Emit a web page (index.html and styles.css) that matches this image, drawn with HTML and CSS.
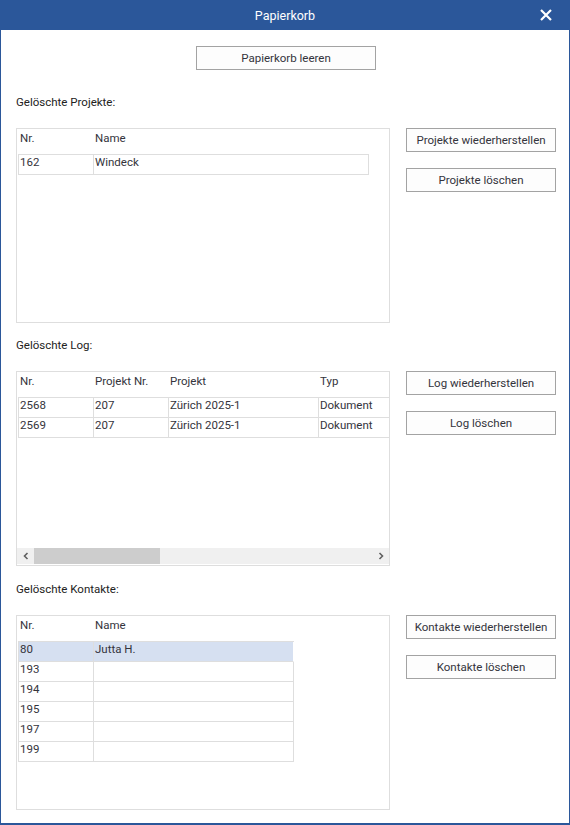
FILE: index.html
```html
<!DOCTYPE html>
<html lang="de">

<head>
    <meta charset="UTF-8">
    <meta name="viewport" content="width=device-width, initial-scale=1.0">
    <title>Papierkorb</title>
    <link rel="stylesheet" href="styles.css">
</head>

<body>
    <div class="window">
        <div class="titlebar">
            <span class="title">Papierkorb</span>
            <button class="close-btn" title="Schließen">
                <svg width="12" height="12" viewBox="0 0 12 12">
                    <path d="M1 1 L11 11 M11 1 L1 11" stroke="#fff" stroke-width="2.2" fill="none" />
                </svg>
            </button>
        </div>

        <div class="content">
            <div class="top-actions">
                <button class="btn btn-wide">Papierkorb leeren</button>
            </div>

            <!-- Projekte -->
            <section class="section">
                <div class="section-label">Gelöschte Projekte:</div>
                <div class="section-row">
                    <div class="grid-box">
                        <div class="grid-head">
                            <div class="cell c-nr">Nr.</div>
                            <div class="cell c-name">Name</div>
                        </div>
                        <div class="grid-body">
                            <div class="row">
                                <div class="cell c-nr">162</div>
                                <div class="cell c-name">Windeck</div>
                            </div>
                        </div>
                    </div>
                    <div class="actions">
                        <button class="btn">Projekte wiederherstellen</button>
                        <button class="btn">Projekte löschen</button>
                    </div>
                </div>
            </section>

            <!-- Log -->
            <section class="section">
                <div class="section-label">Gelöschte Log:</div>
                <div class="section-row">
                    <div class="grid-box has-scroll">
                        <div class="grid-area">
                            <div class="grid-head">
                                <div class="cell c-nr">Nr.</div>
                                <div class="cell c-pnr">Projekt Nr.</div>
                                <div class="cell c-proj">Projekt</div>
                                <div class="cell c-typ">Typ</div>
                            </div>
                            <div class="grid-body">
                                <div class="row">
                                    <div class="cell c-nr">2568</div>
                                    <div class="cell c-pnr">207</div>
                                    <div class="cell c-proj">Zürich 2025-1</div>
                                    <div class="cell c-typ">Dokument</div>
                                </div>
                                <div class="row">
                                    <div class="cell c-nr">2569</div>
                                    <div class="cell c-pnr">207</div>
                                    <div class="cell c-proj">Zürich 2025-1</div>
                                    <div class="cell c-typ">Dokument</div>
                                </div>
                            </div>
                        </div>
                        <div class="hscroll">
                            <span class="arrow">
                                <svg width="8" height="8" viewBox="0 0 8 8"><path d="M5.5 1 L2.5 4 L5.5 7" stroke="#606060" stroke-width="1.6" fill="none" /></svg>
                            </span>
                            <div class="track"><div class="thumb"></div></div>
                            <span class="arrow">
                                <svg width="8" height="8" viewBox="0 0 8 8"><path d="M2.5 1 L5.5 4 L2.5 7" stroke="#606060" stroke-width="1.6" fill="none" /></svg>
                            </span>
                        </div>
                    </div>
                    <div class="actions">
                        <button class="btn">Log wiederherstellen</button>
                        <button class="btn">Log löschen</button>
                    </div>
                </div>
            </section>

            <!-- Kontakte -->
            <section class="section section-last">
                <div class="section-label">Gelöschte Kontakte:</div>
                <div class="section-row">
                    <div class="grid-box">
                        <div class="grid-head">
                            <div class="cell c-nr">Nr.</div>
                            <div class="cell c-kname">Name</div>
                        </div>
                        <div class="grid-body">
                            <div class="row selected">
                                <div class="cell c-nr">80</div>
                                <div class="cell c-kname">Jutta H.</div>
                            </div>
                            <div class="row">
                                <div class="cell c-nr">193</div>
                                <div class="cell c-kname"></div>
                            </div>
                            <div class="row">
                                <div class="cell c-nr">194</div>
                                <div class="cell c-kname"></div>
                            </div>
                            <div class="row">
                                <div class="cell c-nr">195</div>
                                <div class="cell c-kname"></div>
                            </div>
                            <div class="row">
                                <div class="cell c-nr">197</div>
                                <div class="cell c-kname"></div>
                            </div>
                            <div class="row">
                                <div class="cell c-nr">199</div>
                                <div class="cell c-kname"></div>
                            </div>
                        </div>
                    </div>
                    <div class="actions">
                        <button class="btn">Kontakte wiederherstellen</button>
                        <button class="btn">Kontakte löschen</button>
                    </div>
                </div>
            </section>
        </div>
    </div>
</body>

</html>
```

FILE: styles.css
```css
body {
    margin: 0;
    font-family: Roboto, "Liberation Sans", Arial, sans-serif;
    font-size: 11.5px;
    color: #34343c;
    background: #fff;
}

.window {
    width: 570px;
    height: 825px;
    box-sizing: border-box;
    border: 1px solid #2b579a;
    border-top: none;
    border-bottom-width: 2px;
    display: flex;
    flex-direction: column;
    background: #fff;
    overflow: hidden;
}

.titlebar {
    height: 30px;
    margin: 0 -1px;
    background-color: #2b579a;
    color: #fff;
    display: flex;
    align-items: center;
    justify-content: center;
    position: relative;
}

.title {
    font-size: 12.5px;
}

.close-btn {
    position: absolute;
    right: 18px;
    top: 9px;
    width: 12px;
    height: 12px;
    padding: 0;
    border: none;
    background: none;
    cursor: pointer;
    display: flex;
}

.content {
    padding: 16px 13px 0 15px;
}

.top-actions {
    display: flex;
    justify-content: center;
}

button {
    font-family: inherit;
}

.btn {
    width: 150px;
    height: 24px;
    padding: 0;
    font-size: 11.5px;
    color: #34343c;
    background-color: #fdfdfd;
    border: 1px solid #a3a3a3;
    cursor: pointer;
}

.btn:hover {
    background-color: #e5f1fb;
}

.btn-wide {
    width: 180px;
}

.section {
    margin-top: 15px;
}

.section:first-of-type {
    margin-top: 25px;
}

.section-last {
    margin-top: 16px;
}

.section-label {
    line-height: 14px;
    color: #222;
    margin-bottom: 19px;
}

.section-row {
    display: flex;
    gap: 16px;
}

.actions {
    width: 150px;
    display: flex;
    flex-direction: column;
    gap: 16px;
}

.grid-box {
    width: 374px;
    height: 195px;
    box-sizing: border-box;
    border: 1px solid #dedede;
    padding-left: 1px;
    overflow: hidden;
}

.grid-box.has-scroll {
    padding-left: 0;
    display: flex;
    flex-direction: column;
}

.has-scroll .grid-area {
    flex: 1;
    padding-left: 1px;
    overflow: hidden;
}

.grid-head {
    display: flex;
    height: 25px;
}

.grid-head .cell {
    border-color: transparent;
    padding-top: 2px;
}

.grid-body {
    border-top: 1px solid #dedede;
    display: inline-block;
}

.has-scroll .grid-body {
    display: block;
}

.row {
    display: flex;
    height: 20px;
}

.row.selected {
    background-color: #d6e0f1;
}

.cell {
    box-sizing: border-box;
    flex: none;
    height: 100%;
    padding: 0 0 0 1px;
    line-height: 14px;
    white-space: nowrap;
    overflow: hidden;
    border-right: 1px solid #dedede;
    border-bottom: 1px solid #dedede;
}

.grid-body .row .cell:first-child,
.grid-head .cell:first-child {
    border-left: 1px solid #dedede;
}

.grid-head .cell:first-child {
    border-left-color: transparent;
}

.c-nr { width: 76px; }
.c-name { width: 275px; }
.c-pnr { width: 75px; }
.c-proj { width: 150px; }
.c-typ { width: 150px; }
.c-kname { width: 200px; }

.row.selected .c-kname {
    border-right-color: #fff;
}

.hscroll {
    height: 16px;
    margin-bottom: 1px;
    display: flex;
    background-color: #f0f0f0;
}

.arrow {
    width: 17px;
    display: flex;
    align-items: center;
    justify-content: center;
}

.track {
    flex: 1;
    display: flex;
}

.thumb {
    width: 126px;
    background-color: #cdcdcd;
}
```
